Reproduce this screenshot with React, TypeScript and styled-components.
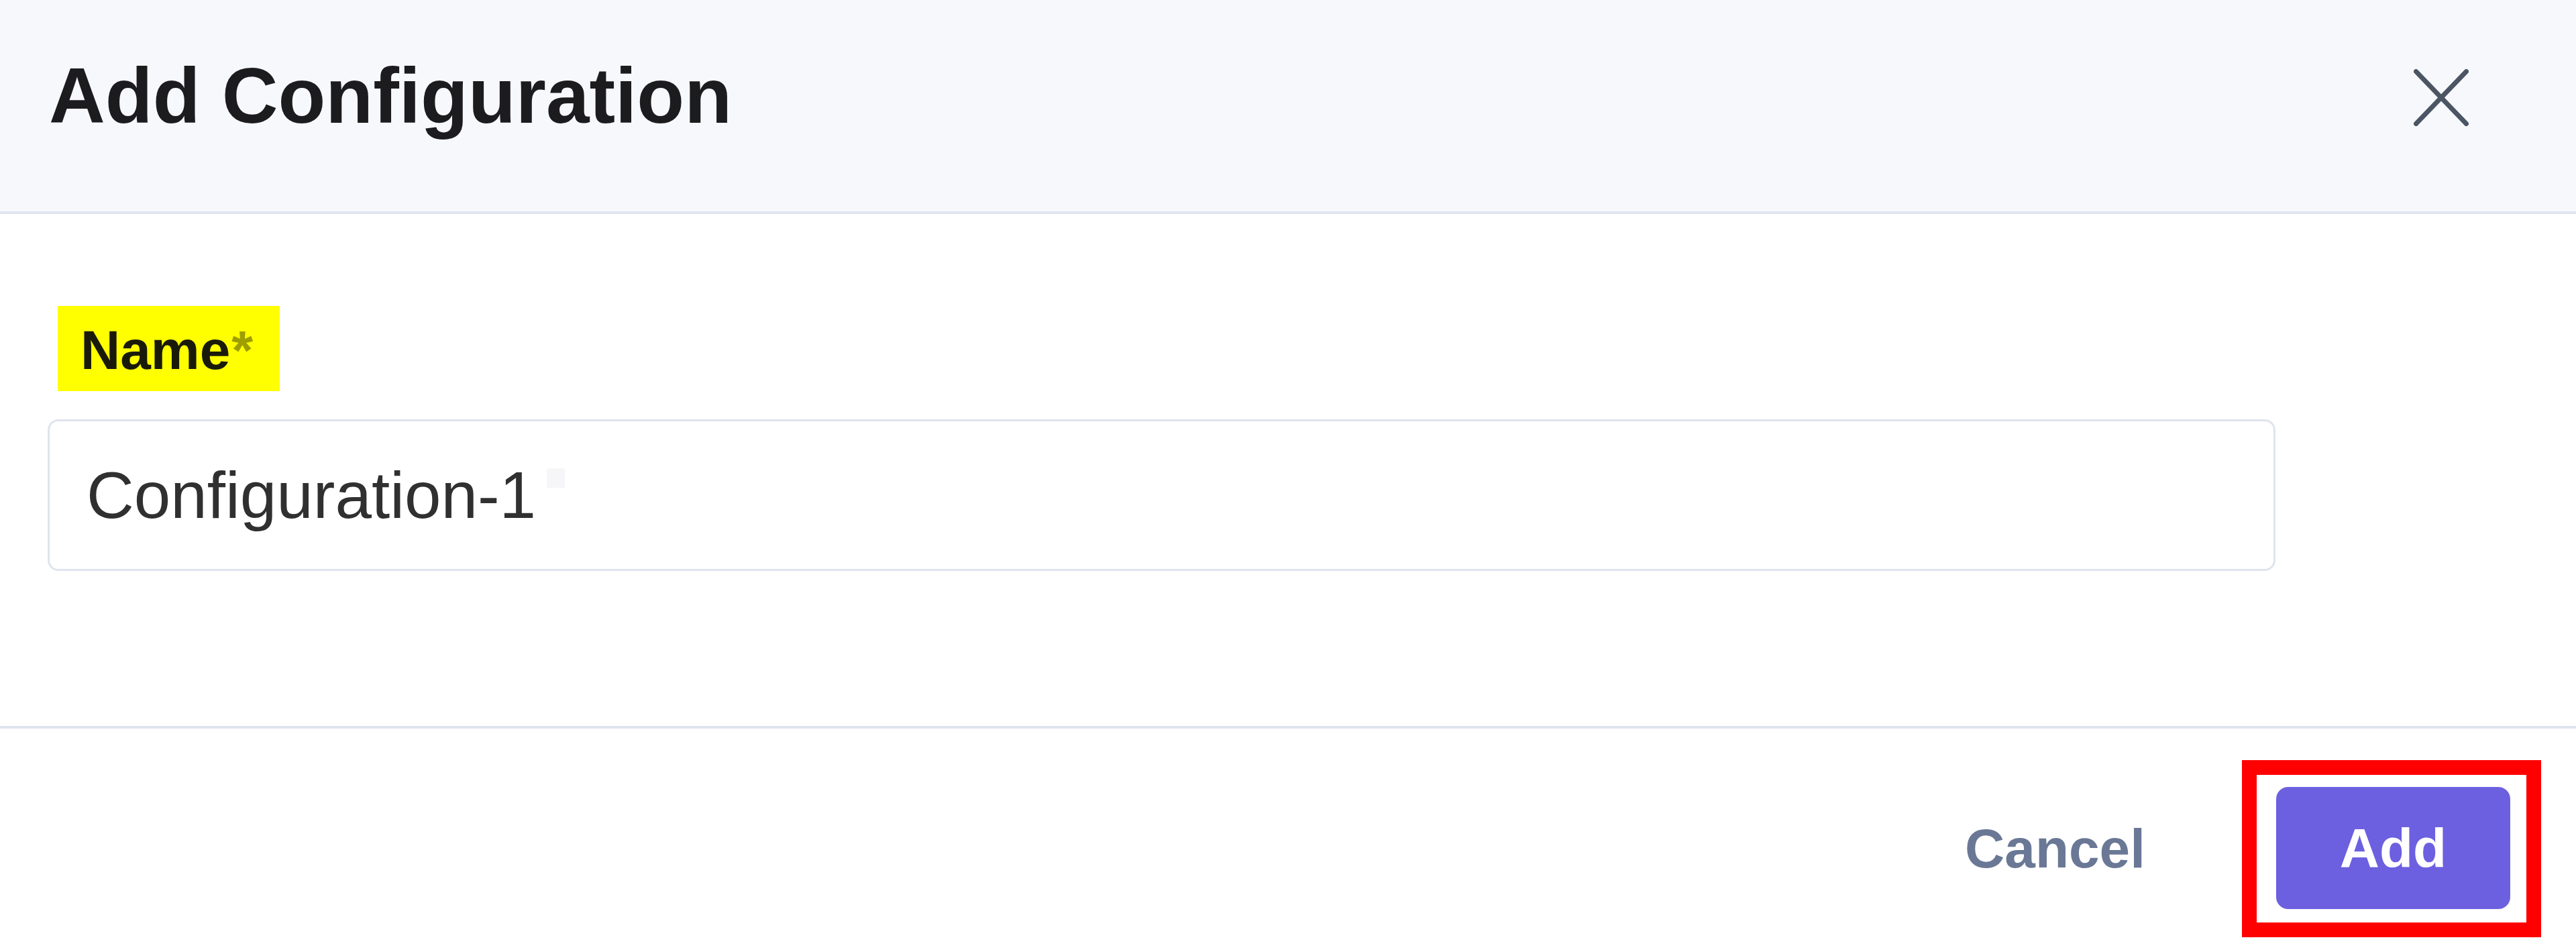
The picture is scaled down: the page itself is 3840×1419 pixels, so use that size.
import React from "react";
import styled, { createGlobalStyle } from "styled-components";

const GlobalStyle = createGlobalStyle`
  html, body {
    margin: 0;
    padding: 0;
    background: #ffffff;
  }
  body {
    font-family: "Liberation Sans", Arial, sans-serif;
  }
  * {
    box-sizing: border-box;
  }
`;

const Dialog = styled.div`
  width: 100%;
  min-height: 1419px;
  display: flex;
  flex-direction: column;
  background: #ffffff;
`;

const Header = styled.header`
  height: 319px;
  display: flex;
  align-items: center;
  justify-content: space-between;
  padding: 0 160px 30px 73px;
  background: #f7f8fc;
  border-bottom: 4px solid #dfe4ee;
`;

const Title = styled.h1`
  margin: 0;
  font-size: 116px;
  line-height: 1;
  font-weight: 700;
  color: #1c1c1e;
`;

const CloseButton = styled.button`
  display: flex;
  padding: 0;
  margin-top: 6px;
  border: none;
  background: transparent;
  color: #4b5563;
  cursor: pointer;
`;

const Body = styled.section`
  display: flex;
  flex-direction: column;
  align-items: flex-start;
  gap: 42px;
  padding: 137px 448px 231px 71px;
`;

const Label = styled.label`
  display: inline-block;
  margin-left: 15px;
  padding: 25px 40px 20px 34px;
  background: #ffff00;
  font-size: 82px;
  line-height: 1;
  font-weight: 700;
  color: #1a1a0a;
`;

const Required = styled.span`
  margin-left: 2px;
  color: rgba(40, 40, 0, 0.45);
`;

const InputBox = styled.div`
  width: 100%;
  height: 226px;
  display: flex;
  align-items: center;
  padding-left: 55px;
  border: 3px solid #dfe4ee;
  border-radius: 16px;
  background: #ffffff;
`;

const InputValue = styled.span`
  font-size: 98px;
  line-height: 1;
  font-weight: 400;
  color: #303030;
`;

const Ghost = styled.span`
  align-self: flex-start;
  width: 27px;
  height: 29px;
  margin: 70px 0 0 16px;
  background: #f6f6f8;
`;

const Footer = styled.footer`
  flex: 1;
  display: flex;
  justify-content: flex-end;
  align-items: center;
  gap: 144px;
  padding: 24px 52px 0 0;
  border-top: 4px solid #dfe4ee;
`;

const CancelButton = styled.button`
  padding: 0;
  border: none;
  background: transparent;
  font-family: "Liberation Sans", Arial, sans-serif;
  font-size: 82px;
  line-height: 1;
  font-weight: 700;
  color: #6a7896;
  cursor: pointer;
`;

const Highlight = styled.div`
  display: flex;
  padding: 18px 24px 20px 29px;
  border: 22px solid #ff0000;
  background: #ffffff;
`;

const AddButton = styled.button`
  width: 349px;
  height: 182px;
  display: flex;
  align-items: center;
  justify-content: center;
  padding: 0;
  border: none;
  border-radius: 18px;
  background: #6c60e0;
  font-family: "Liberation Sans", Arial, sans-serif;
  font-size: 82px;
  line-height: 1;
  font-weight: 700;
  color: #ffffff;
  cursor: pointer;
`;

const CloseIcon = () => (
  <svg width="82" height="85" viewBox="0 0 82 85" fill="none" aria-hidden="true">
    <path
      d="M3.5 3.5 L78.5 81.5 M78.5 3.5 L3.5 81.5"
      stroke="currentColor"
      strokeWidth="7"
      strokeLinecap="round"
    />
  </svg>
);

export default function App() {
  return (
    <>
      <GlobalStyle />
      <Dialog role="dialog" aria-labelledby="dlg-title">
        <Header>
          <Title id="dlg-title">Add Configuration</Title>
          <CloseButton aria-label="Close">
            <CloseIcon />
          </CloseButton>
        </Header>
        <Body>
          <Label>
            Name<Required>*</Required>
          </Label>
          <InputBox>
            <InputValue>Configuration-1</InputValue>
            <Ghost />
          </InputBox>
        </Body>
        <Footer>
          <CancelButton>Cancel</CancelButton>
          <Highlight>
            <AddButton>Add</AddButton>
          </Highlight>
        </Footer>
      </Dialog>
    </>
  );
}
